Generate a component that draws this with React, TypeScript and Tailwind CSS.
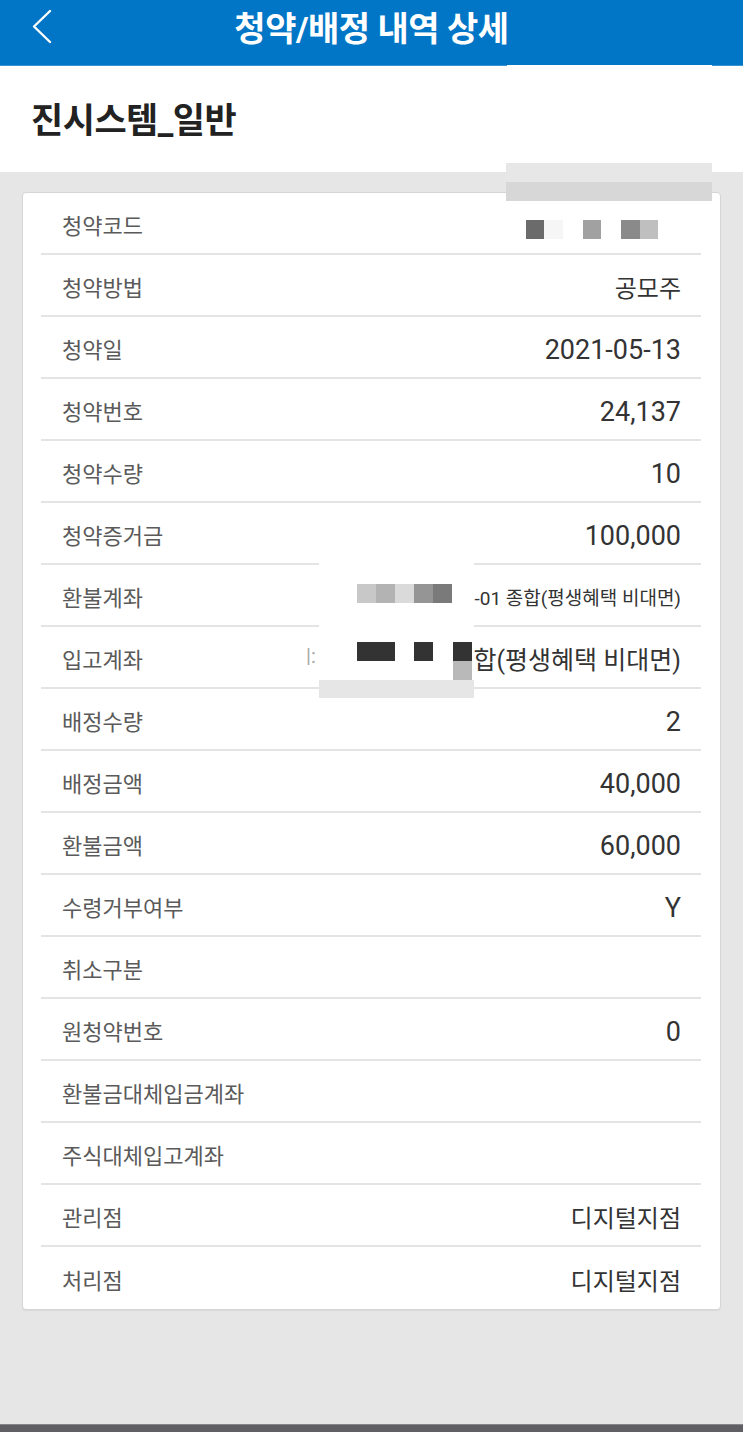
import React from "react";

type Row = { label: string; value?: string; kind?: "num" | "ko" | "small" | "big" };

const rows: Row[] = [
  { label: "청약코드" },
  { label: "청약방법", value: "공모주", kind: "ko" },
  { label: "청약일", value: "2021-05-13", kind: "num" },
  { label: "청약번호", value: "24,137", kind: "num" },
  { label: "청약수량", value: "10", kind: "num" },
  { label: "청약증거금", value: "100,000", kind: "num" },
  { label: "환불계좌", value: "-01 종합(평생혜택 비대면)", kind: "small" },
  { label: "입고계좌", value: "합(평생혜택 비대면)", kind: "big" },
  { label: "배정수량", value: "2", kind: "num" },
  { label: "배정금액", value: "40,000", kind: "num" },
  { label: "환불금액", value: "60,000", kind: "num" },
  { label: "수령거부여부", value: "Y", kind: "num" },
  { label: "취소구분" },
  { label: "원청약번호", value: "0", kind: "num" },
  { label: "환불금대체입금계좌" },
  { label: "주식대체입고계좌" },
  { label: "관리점", value: "디지털지점", kind: "ko" },
  { label: "처리점", value: "디지털지점", kind: "ko" },
];

function valueClass(kind?: Row["kind"]) {
  if (kind === "num") return "text-[27px]";
  if (kind === "small") return "text-[19px]";
  if (kind === "big") return "text-[25px]";
  return "text-[24px]";
}

export default function App() {
  return (
    <div className="relative w-[743px] h-[1432px] overflow-hidden bg-[#e6e6e6] flex flex-col font-['Roboto','Noto_Sans_CJK_KR',sans-serif]">
      {/* Header */}
      <header className="relative h-[66px] bg-[#0276c6] flex items-center justify-center shrink-0 border-b border-[#3b93d2]">
        <svg
          className="absolute left-[30px] top-[8px]"
          width="24"
          height="38"
          viewBox="0 0 24 38"
          fill="none"
        >
          <polyline points="20,3 4,18.5 20,34" stroke="white" strokeWidth="2.4" strokeLinecap="round" strokeLinejoin="round" />
        </svg>
        <h1 className="text-white text-[34px] font-bold leading-none pb-[8px] tracking-[-0.5px]">청약/배정 내역 상세</h1>
      </header>

      {/* Title */}
      <section className="h-[106px] bg-white flex items-center pl-[31px] shrink-0">
        <h2 className="text-[35px] font-bold text-[#222222] leading-none pt-[4px] tracking-[-0.5px]">진시스템_일반</h2>
      </section>

      {/* Card */}
      <main className="px-[22px] pt-[20px]">
        <div className="w-[699px] bg-white border border-[#d6d6d6] rounded-[4px] pl-[18px] pr-[19px] shadow-[0_1px_1px_rgba(0,0,0,0.06)]">
          {rows.map((r, i) => (
            <div
              key={r.label}
              className={`flex items-center justify-between h-[62px] pt-[7px] ${i < rows.length - 1 ? "border-b-2 border-[#e4e4e4]" : ""}`}
            >
              <span className="pl-[21px] text-[22px] text-[#5a5a5a] leading-none">{r.label}</span>
              {r.value ? (
                <span className={`pr-[20px] text-[#333333] leading-none whitespace-nowrap ${valueClass(r.kind)}`}>{r.value}</span>
              ) : null}
            </div>
          ))}
        </div>
      </main>

      <div className="flex-1" />
      <div className="h-[8px] bg-[#5f5f64] border-t border-[#85858a] shrink-0" />

      {/* Redaction overlays (mosaic pasted over the screenshot) */}
      <div className="absolute left-[507px] top-[65px] w-[205px] h-[3px] bg-white" />
      <div className="absolute left-[506px] top-[163px] w-[206px] flex flex-col">
        <div className="h-[19px] bg-[#e7e7e7]" />
        <div className="h-[19px] bg-[#d7d7d7]" />
      </div>

      <div className="absolute left-[526px] top-[220px] flex h-[19px]">
        <div className="w-[18px] bg-[#6b6b6b]" />
        <div className="w-[19px] bg-[#f6f6f6]" />
        <div className="w-[20px]" />
        <div className="w-[18px] bg-[#a1a1a1]" />
        <div className="w-[20px]" />
        <div className="w-[19px] bg-[#8a8a8a]" />
        <div className="w-[18px] bg-[#bfbfbf]" />
      </div>

      <div className="absolute left-[319px] top-[560px] w-[155px] flex flex-col">
        <div className="h-[120px] bg-white flex flex-col pl-[38px] pt-[24px]">
          <div className="flex h-[19px]">
            <div className="w-[19px] bg-[#c8c8c8]" />
            <div className="w-[19px] bg-[#b3b3b3]" />
            <div className="w-[19px] bg-[#dadada]" />
            <div className="w-[19px] bg-[#959595]" />
            <div className="w-[19px] bg-[#7a7a7a]" />
          </div>
          <div className="flex mt-[39px]">
            <div className="w-[38px] h-[19px] bg-[#333333]" />
            <div className="w-[19px]" />
            <div className="w-[19px] h-[19px] bg-[#333333]" />
            <div className="w-[20px]" />
            <div className="flex flex-col w-[19px]">
              <div className="h-[19px] bg-[#333333]" />
              <div className="h-[19px] bg-[#b9b9b9]" />
            </div>
          </div>
        </div>
        <div className="h-[18px] bg-[#e6e6e6]" />
      </div>
      <span className="absolute left-[306px] top-[646px] text-[20px] leading-none text-[#a8a8a8]">|:</span>
    </div>
  );
}
